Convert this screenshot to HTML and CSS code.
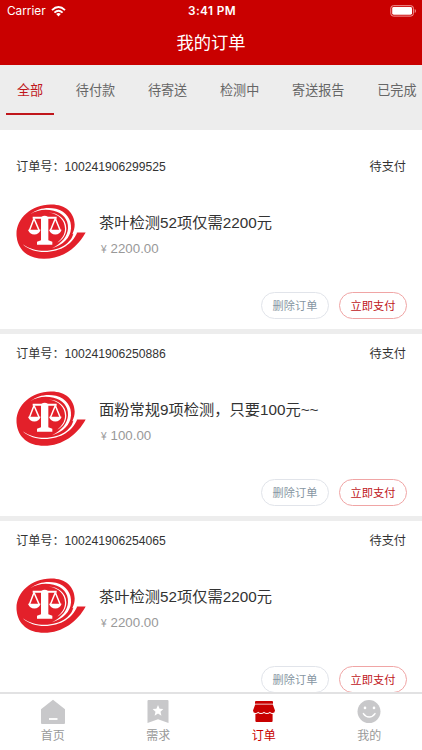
FILE: index.html
```html
<!DOCTYPE html>
<html lang="zh-CN">
<head>
    <meta charset="UTF-8">
    <meta name="viewport" content="width=device-width, initial-scale=1.0">
    <title>我的订单</title>
    <link rel="stylesheet" href="styles.css">
</head>
<body>
    <!-- shared product logo -->
    <svg class="defs" width="0" height="0">
        <symbol id="logo" viewBox="0 0 210 164">
            <path fill="#e3202a" d="M2 98C-4 48 42 2 104 1C148 0 175 25 176 61C176 72 174 79 169 90L183 85H209C185 129 141 164 84 164C38 164 6 139 2 98Z"/>
            <path fill="#fff" d="M20 120C60 148 118 144 150 120C163 109 170 100 173 84H184C176 103 165 115 149 126C116 147 55 153 20 120Z"/>
            <path fill="#fff" d="M42 31C66 12 94 8 120 14C152 23 167 47 165 73C163 101 142 122 108 132C139 116 155 95 156 72C157 45 139 26 113 20C88 14 64 17 42 31Z"/>
            <path fill="#fff" d="M98 25C127 26 150 44 151 72C151 91 141 106 124 116C139 103 147 90 147 74C147 48 128 30 98 25Z"/>
            <path fill="#fff" d="M50 38H76Q86 32 96 38H122V44H97V108L109 113V122H63V113L75 108V44H50Z"/>
            <path fill="none" stroke="#fff" stroke-width="4.5" d="M54 43L40 80M54 43L70 80M118 43L103 80M118 43L133 80"/>
            <path fill="#fff" d="M36 77H74Q69 91 55 91Q41 91 36 77ZM99 77H137Q132 91 118 91Q104 91 99 77Z"/>
        </symbol>
    </svg>

    <div class="phone">
        <header class="header">
            <div class="status-bar">
                <div class="carrier">
                    <span>Carrier</span>
                    <svg width="15" height="11" viewBox="0 0 15 11" fill="none" stroke="#fff" stroke-width="1.9">
                        <path d="M1 4.1Q7.5-1.9 14 4.1M3.4 6.6Q7.5 2.8 11.6 6.6"/>
                        <path d="M5.2 8.1Q7.5 6.1 9.8 8.1L7.5 10.5Z" fill="#fff" stroke="none"/>
                    </svg>
                </div>
                <div class="time">3:41 PM</div>
                <div class="battery">
                    <svg width="27" height="12" viewBox="0 0 27 12">
                        <rect x=".8" y=".7" width="22.6" height="10.4" rx="2.6" fill="none" stroke="#f29a9a"/>
                        <rect x="2.2" y="2.1" width="19.8" height="7.6" rx="1.4" fill="#fff"/>
                        <path d="M24.7 4V8Q26 7.3 26 6T24.7 4Z" fill="#f08a8a"/>
                    </svg>
                </div>
            </div>
            <h1>我的订单</h1>
        </header>

        <nav class="tabs">
            <a class="tab active">全部</a>
            <a class="tab">待付款</a>
            <a class="tab">待寄送</a>
            <a class="tab">检测中</a>
            <a class="tab">寄送报告</a>
            <a class="tab">已完成</a>
        </nav>

        <main class="orders">
            <section class="order">
                <div class="order-head">
                    <span>订单号：100241906299525</span>
                    <span>待支付</span>
                </div>
                <div class="order-body">
                    <svg class="logo"><use href="#logo"/></svg>
                    <div class="info">
                        <h2>茶叶检测52项仅需2200元</h2>
                        <p class="price"><small>¥</small>2200.00</p>
                    </div>
                </div>
                <div class="actions">
                    <button class="btn">删除订单</button>
                    <button class="btn pay">立即支付</button>
                </div>
            </section>

            <section class="order">
                <div class="order-head">
                    <span>订单号：100241906250886</span>
                    <span>待支付</span>
                </div>
                <div class="order-body">
                    <svg class="logo"><use href="#logo"/></svg>
                    <div class="info">
                        <h2>面粉常规9项检测，只要100元~~</h2>
                        <p class="price"><small>¥</small>100.00</p>
                    </div>
                </div>
                <div class="actions">
                    <button class="btn">删除订单</button>
                    <button class="btn pay">立即支付</button>
                </div>
            </section>

            <section class="order">
                <div class="order-head">
                    <span>订单号：100241906254065</span>
                    <span>待支付</span>
                </div>
                <div class="order-body">
                    <svg class="logo"><use href="#logo"/></svg>
                    <div class="info">
                        <h2>茶叶检测52项仅需2200元</h2>
                        <p class="price"><small>¥</small>2200.00</p>
                    </div>
                </div>
                <div class="actions">
                    <button class="btn">删除订单</button>
                    <button class="btn pay">立即支付</button>
                </div>
            </section>
        </main>

        <footer class="tabbar">
            <a class="bar-item">
                <svg width="26" height="26" viewBox="0 0 26 26">
                    <path fill="#c8c8ca" d="M13 .7L25 10.3V24Q25 25 24 25H2Q1 25 1 24V10.3Z"/>
                    <path stroke="#fff" stroke-width="1.8" d="M9 20H17.5"/>
                </svg>
                <span>首页</span>
            </a>
            <a class="bar-item">
                <svg width="26" height="26" viewBox="0 0 26 26">
                    <path fill="#c8c8ca" d="M3.5 1H22.5Q23.5 1 23.5 2V24L13 20.3L2.5 24V2Q2.5 1 3.5 1Z"/>
                    <path fill="#fff" d="M13 6L14.6 9.8L18.4 10.1L15.5 12.7L16.4 16.8L13 14.6L9.6 16.8L10.5 12.7L7.6 10.1L11.4 9.8Z"/>
                </svg>
                <span>需求</span>
            </a>
            <a class="bar-item active">
                <svg width="26" height="26" viewBox="0 0 26 26" fill="#c80000">
                    <path d="M5 2H21Q22 2 22 3V4.8H4V3Q4 2 5 2Z"/>
                    <path d="M4.2 5.6H21.8L24 11.5Q23.8 14 21.6 14Q19.8 14 18.9 12.7Q17.8 14 16 14Q14.1 14 13 12.7Q11.9 14 10 14Q8.2 14 7.1 12.7Q6.2 14 4.4 14Q2.2 14 2 11.5Z"/>
                    <path d="M4.4 14.9Q6 14.9 7.1 14Q8.3 15 10 15Q11.7 15 13 14Q14.3 15 16 15Q17.7 15 18.9 14Q20 14.9 21.6 14.9V22Q21.6 23 20.6 23H5.4Q4.4 23 4.4 22Z"/>
                </svg>
                <span>订单</span>
            </a>
            <a class="bar-item">
                <svg width="26" height="26" viewBox="0 0 26 26">
                    <circle cx="13" cy="12.6" r="11.5" fill="#c8c8ca"/>
                    <circle cx="9" cy="8.9" r="1.3" fill="#fff"/>
                    <circle cx="18" cy="8.9" r="1.3" fill="#fff"/>
                    <path fill="none" stroke="#fff" stroke-width="1.5" stroke-linecap="round" d="M7.4 14.6Q9.8 18 13.2 18T19 14.6"/>
                </svg>
                <span>我的</span>
            </a>
        </footer>
    </div>
</body>
</html>
```
FILE: styles.css
```css
* {
    box-sizing: border-box;
}

body {
    margin: 0;
    font-family: "Liberation Sans", "Noto Sans CJK SC", sans-serif;
    color: #333;
    background-color: #fff;
}

.defs {
    display: block;
}

.phone {
    display: flex;
    flex-direction: column;
    width: 422px;
    height: 750px;
    overflow: hidden;
}

/* Header */
.header {
    flex: none;
    height: 65px;
    background-color: #c90000;
    color: #fff;
}

.status-bar {
    display: grid;
    grid-template-columns: 1fr auto 1fr;
    align-items: center;
    height: 22px;
    padding: 0 5px 0 7px;
    font-family: Inter, sans-serif;
    font-size: 11.8px;
}

.carrier {
    display: flex;
    align-items: center;
    gap: 5px;
}

.time {
    font-weight: 600;
    letter-spacing: 0.4px;
}

.battery {
    display: flex;
    justify-content: flex-end;
}

h1 {
    margin: 0;
    font-size: 17.3px;
    font-weight: 400;
    line-height: 42px;
    text-align: center;
}

/* Order status tabs */
.tabs {
    display: flex;
    flex: none;
    gap: 10px;
    height: 65px;
    padding-left: 5.5px;
    background-color: #ededed;
}

.tab {
    flex: none;
    height: 50px;
    padding: 0 11.4px;
    font-size: 13.1px;
    line-height: 52px;
    color: #666;
    white-space: nowrap;
}

.tab.active {
    color: #c0161b;
    border-bottom: 2px solid #c0161b;
}

/* Order list */
.orders {
    flex: 1;
    min-height: 0;
    padding-top: 17px;
    overflow: hidden;
}

.order {
    height: 187px;
    padding: 0 15px 0 16px;
    border-bottom: 5px solid #ededed;
}

.order-head {
    display: flex;
    justify-content: space-between;
    height: 38px;
    padding-right: 1px;
    font-size: 12.15px;
    line-height: 40px;
}

.order-body {
    display: flex;
    gap: 13px;
    height: 107px;
    padding-top: 19px;
}

.logo {
    flex: none;
    width: 70px;
    height: 55px;
}

.info {
    padding-top: 7px;
}

h2 {
    margin: 0;
    font-size: 15.25px;
    font-weight: 400;
    line-height: 24px;
}

.price {
    margin: 1px 0 0 2px;
    font-size: 13.3px;
    line-height: 26px;
    color: #999;
}

.price small {
    margin-right: 4px;
    font-size: 10px;
}

.actions {
    display: flex;
    justify-content: flex-end;
    gap: 10px;
}

.btn {
    width: 68px;
    height: 27px;
    padding: 0 0 2px;
    border: 1px solid #e1e4ea;
    border-radius: 14px;
    background-color: #fff;
    color: #8796a2;
    font-family: inherit;
    font-size: 11.2px;
}

.btn.pay {
    border-color: #f0a5a5;
    color: #c0161b;
}

/* Bottom bar */
.tabbar {
    display: flex;
    flex: none;
    height: 58px;
    padding-top: 5px;
    border-top: 2px solid #e2e2e3;
    background-color: #fff;
}

.bar-item {
    display: flex;
    flex: 1;
    flex-direction: column;
    align-items: center;
    font-size: 12px;
    line-height: 22px;
    color: #999;
}

.bar-item.active {
    color: #c80000;
}
```
